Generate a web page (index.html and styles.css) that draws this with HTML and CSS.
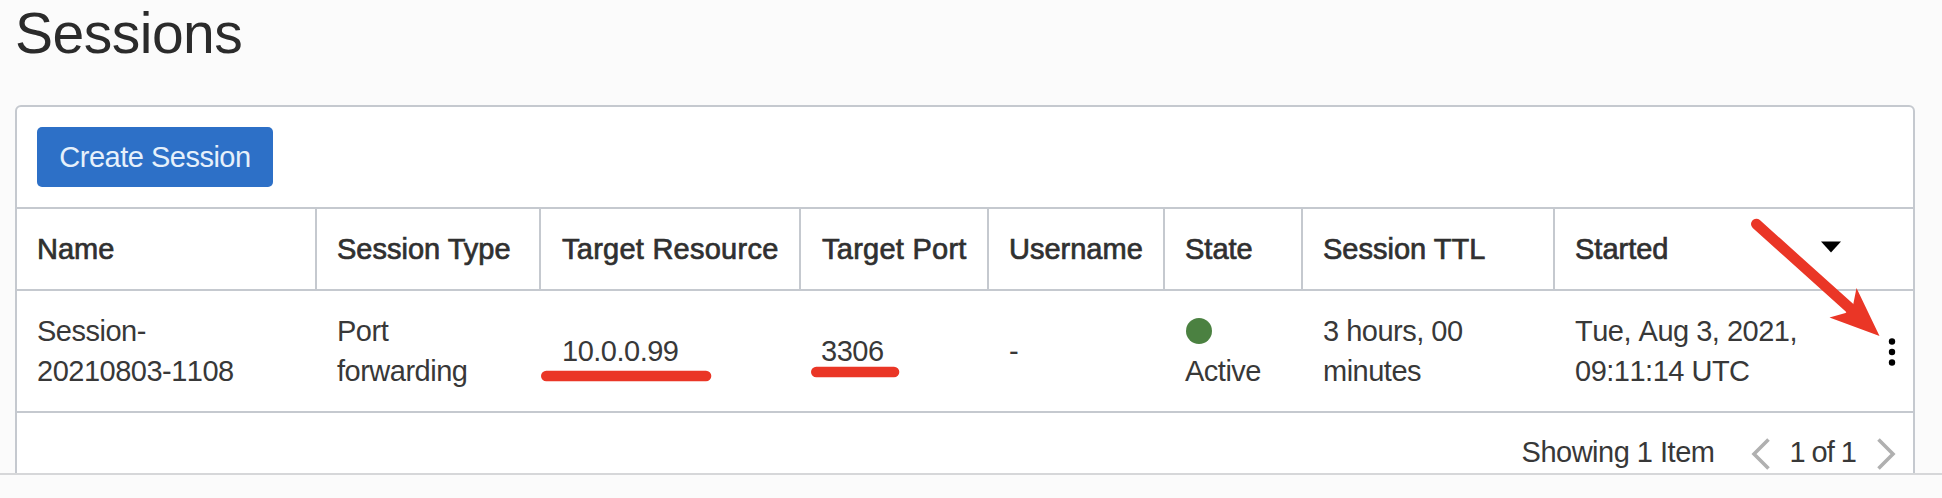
FILE: index.html
```
<!DOCTYPE html>
<html lang="en">
<head>
<meta charset="utf-8">
<title>Sessions</title>
<link rel="stylesheet" href="styles.css">
</head>
<body>
<main class="page">
  <h1 class="title">Sessions</h1>
  <section class="panel">
    <div class="toolbar"><button class="create">Create Session</button></div>
    <div class="row head">
      <div class="cell">Name</div>
      <div class="cell">Session Type</div>
      <div class="cell wide">Target Resource</div>
      <div class="cell wide">Target Port</div>
      <div class="cell">Username</div>
      <div class="cell">State</div>
      <div class="cell">Session TTL</div>
      <div class="cell started">Started
        <svg class="sort" width="20" height="12" viewBox="0 0 20 12"><path d="M0 .5H20L10 11.5Z"/></svg>
      </div>
    </div>
    <div class="row body">
      <div class="cell">Session-<br>20210803-1108</div>
      <div class="cell">Port<br>forwarding</div>
      <div class="cell address">10.0.0.99</div>
      <div class="cell">3306</div>
      <div class="cell">-</div>
      <div class="cell state"><span class="dot"></span>Active</div>
      <div class="cell">3 hours, 00<br>minutes</div>
      <div class="cell started"><span>Tue, Aug 3, 2021,<br>09:11:14 UTC</span>
        <svg class="kebab" width="8" height="30" viewBox="0 0 8 30"><circle cx="4" cy="4.5" r="3.2"/><circle cx="4" cy="15" r="3.2"/><circle cx="4" cy="25.5" r="3.2"/></svg>
      </div>
    </div>
    <div class="footer">
      <span>Showing 1 Item</span>
      <svg class="chev prev" width="19" height="32" viewBox="0 0 19 32"><path d="M17.5 1.5L3 16L17.5 30.5"/></svg>
      <span class="pages">1 of 1</span>
      <svg class="chev next" width="19" height="32" viewBox="0 0 19 32"><path d="M1.5 1.5L16 16L1.5 30.5"/></svg>
    </div>
  </section>
</main>
<svg class="marks" width="1942" height="498" viewBox="0 0 1942 498">
  <path class="line" d="M546.3 376H706"/>
  <path class="line" d="M816.3 372H894"/>
  <path class="line" d="M1756.3 224L1852 310"/>
  <path class="tip" d="M1879.5 336L1856.5 288L1853 305.5L1845.5 313L1829.5 317.5Z"/>
</svg>
</body>
</html>
```

FILE: styles.css
```
* { box-sizing: border-box; }
body {
  margin: 0;
  background: #fbfbfb;
  color: #383838;
  font: 29px/40px "Liberation Sans", Arial, sans-serif;
  letter-spacing: -.5px;
  font-kerning: none;
}
.page {
  height: 475px;
  padding: 0 27px 0 15px;
  overflow: hidden;
  border-bottom: 2px solid #d6d7d9;
}
.title {
  margin: 0;
  height: 105px;
  padding-top: 1px;
  font-size: 57px;
  line-height: 64px;
  font-weight: 400;
  letter-spacing: -.5px;
  color: #2b2b2b;
}
.panel {
  height: 400px;
  border: 2px solid #c5c9cf;
  border-radius: 6px;
  background: #fff;
}
.toolbar {
  height: 102px;
  padding: 20px;
  border-bottom: 2px solid #c5c9cf;
}
.create {
  display: block;
  width: 236px;
  height: 60px;
  padding: 0;
  border: 0;
  border-radius: 5px;
  background: #2d70c7;
  color: #e6f0fb;
  font: inherit;
  letter-spacing: inherit;
}
.row {
  display: grid;
  grid-template-columns: 300px 224px 260px 188px 176px 138px 252px 1fr;
  border-bottom: 2px solid #c5c9cf;
}
.head { height: 82px; }
.body { height: 122px; }
.cell {
  display: flex;
  align-items: center;
  padding-left: 20px;
  white-space: nowrap;
}
.head .cell {
  border-right: 2px solid #c5c9cf;
  letter-spacing: 0;
  font-kerning: normal;
  color: #303030;
  -webkit-text-stroke: .7px #303030;
}
.head .cell:last-child { border-right: 0; }
.head .wide { padding-left: 21px; letter-spacing: .25px; }
.address { padding-left: 21px; }
.started { justify-content: space-between; }
.sort { margin: 0 72px 4px 0; -webkit-text-stroke: 0; fill: #000; }
.kebab { margin: 2px 17px 0 0; fill: #000; }
.state {
  flex-direction: column;
  align-items: flex-start;
  justify-content: center;
}
.dot {
  width: 26px;
  height: 26px;
  margin: 7px 0 7px 1px;
  border-radius: 50%;
  background: #4b8141;
}
.footer {
  display: flex;
  justify-content: flex-end;
  align-items: center;
  height: 78px;
  padding-right: 17px;
}
.chev { margin-top: 3px; fill: none; stroke: #b0b0b0; stroke-width: 3.6; }
.prev { margin-left: 37px; margin-right: 19px; }
.pages { letter-spacing: -1px; }
.next { margin-left: 21px; }
.marks {
  position: absolute;
  inset: 0;
  pointer-events: none;
}
.line { fill: none; stroke: #ea3626; stroke-width: 10.6; stroke-linecap: round; }
.tip { fill: #ea3626; }
```
